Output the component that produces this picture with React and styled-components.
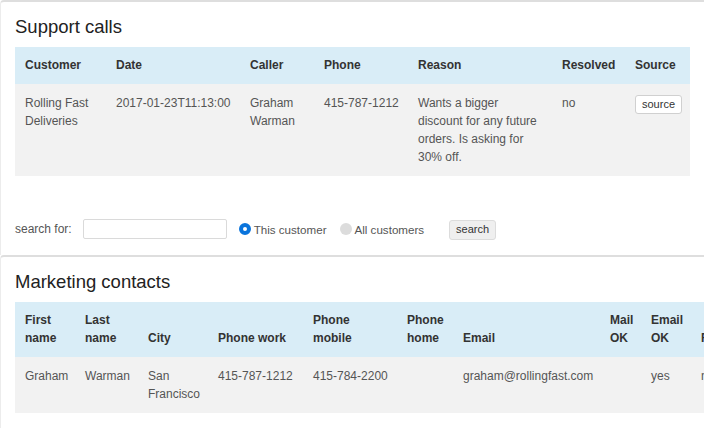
import React from "react";
import styled, { createGlobalStyle } from "styled-components";

const Global = createGlobalStyle`
  html, body { margin: 0; padding: 0; background: #fff; overflow: hidden; }
  body { font-family: "Liberation Sans", Arial, sans-serif; font-size: 12px; color: #555; }
`;

const Page = styled.div`
  width: 704px;
  overflow: hidden;
`;

const Card = styled.section`
  border-top: 2px solid #dedede;
  border-left: 1px solid #ececec;
  border-radius: 4px 0 0 0;
  padding: 15px 14px ${(p) => p.$bottom || 15}px;
`;

const Title = styled.h2`
  margin: 0 0 10px;
  font-size: 18.5px;
  line-height: 20px;
  font-weight: normal;
  color: #222;
`;

const Table = styled.table`
  border-collapse: collapse;
  table-layout: fixed;
  width: ${(p) => p.$width}px;
  font-size: 12px;
  line-height: 18px;
`;

const Th = styled.th`
  background: #d9edf7;
  color: #333;
  font-weight: bold;
  text-align: left;
  vertical-align: bottom;
  padding: 9px 10px 10px;
`;

const Td = styled.td`
  background: #f2f2f2;
  color: #555;
  vertical-align: top;
  padding: 10px 10px 10px;
  white-space: ${(p) => (p.$nowrap ? "nowrap" : "normal")};
`;

const SmallButton = styled.button`
  font-family: "Liberation Sans", Arial, sans-serif;
  font-size: 11px;
  line-height: 17px;
  height: ${(p) => (p.$tall ? 20 : 19)}px;
  padding: 0 6px;
  color: #333;
  background: ${(p) => (p.$grey ? "#efefef" : "#fff")};
  border: 1px solid ${(p) => (p.$grey ? "#dcdcdc" : "#d0d0d0")};
  border-radius: 3px;
  margin-top: 1px;
  cursor: pointer;
`;

const SearchBar = styled.form`
  display: flex;
  align-items: center;
  height: 20px;
  margin-top: 43px;
  color: #555;
  font-size: 12px;
`;

const Label = styled.span`
  margin-right: 11px;
`;

const TextInput = styled.input`
  box-sizing: border-box;
  width: 144px;
  height: 20px;
  border: 1px solid #dadada;
  border-radius: 2px;
  margin: 0 12px 0 0;
  padding: 0 4px;
`;

const RadioOption = styled.label`
  display: flex;
  align-items: center;
  gap: 3px;
  font-size: 11.6px;
  margin-right: ${(p) => p.$mr}px;
`;

const RadioDot = styled.span`
  box-sizing: border-box;
  width: 12px;
  height: 12px;
  border-radius: 50%;
  background: ${(p) => (p.$checked ? "#fff" : "#dcdcdc")};
  border: ${(p) => (p.$checked ? "4px solid #0a74dc" : "none")};
`;

const supportCols = [91, 134, 74, 94, 144, 73, 65];
const marketingCols = [60, 63, 70, 95, 94, 56, 147, 41, 50, 60];

export default function App() {
  return (
    <Page>
      <Global />
      <Card $bottom={16}>
        <Title>Support calls</Title>
        <Table $width={675}>
          <colgroup>
            {supportCols.map((w, i) => (
              <col key={i} style={{ width: w }} />
            ))}
          </colgroup>
          <thead>
            <tr>
              <Th>Customer</Th>
              <Th>Date</Th>
              <Th>Caller</Th>
              <Th>Phone</Th>
              <Th>Reason</Th>
              <Th>Resolved</Th>
              <Th>Source</Th>
            </tr>
          </thead>
          <tbody>
            <tr>
              <Td>Rolling Fast Deliveries</Td>
              <Td $nowrap>2017-01-23T11:13:00</Td>
              <Td>Graham Warman</Td>
              <Td $nowrap>415-787-1212</Td>
              <Td>Wants a bigger discount for any future orders. Is asking for 30% off.</Td>
              <Td>no</Td>
              <Td>
                <SmallButton type="button">source</SmallButton>
              </Td>
            </tr>
          </tbody>
        </Table>
        <SearchBar onSubmit={(e) => e.preventDefault()}>
          <Label>search for:</Label>
          <TextInput type="text" />
          <RadioOption $mr={13}>
            <RadioDot $checked />
            This customer
          </RadioOption>
          <RadioOption $mr={25}>
            <RadioDot />
            All customers
          </RadioOption>
          <SmallButton type="submit" $grey $tall>
            search
          </SmallButton>
        </SearchBar>
      </Card>
      <Card>
        <Title>Marketing contacts</Title>
        <Table $width={736}>
          <colgroup>
            {marketingCols.map((w, i) => (
              <col key={i} style={{ width: w }} />
            ))}
          </colgroup>
          <thead>
            <tr>
              <Th>First name</Th>
              <Th>Last name</Th>
              <Th>City</Th>
              <Th>Phone work</Th>
              <Th>Phone mobile</Th>
              <Th>Phone home</Th>
              <Th>Email</Th>
              <Th>Mail OK</Th>
              <Th>Email OK</Th>
              <Th>Flagged</Th>
            </tr>
          </thead>
          <tbody>
            <tr>
              <Td>Graham</Td>
              <Td>Warman</Td>
              <Td>San Francisco</Td>
              <Td $nowrap>415-787-1212</Td>
              <Td $nowrap>415-784-2200</Td>
              <Td></Td>
              <Td>graham@rollingfast.com</Td>
              <Td></Td>
              <Td>yes</Td>
              <Td>no</Td>
            </tr>
          </tbody>
        </Table>
      </Card>
    </Page>
  );
}
